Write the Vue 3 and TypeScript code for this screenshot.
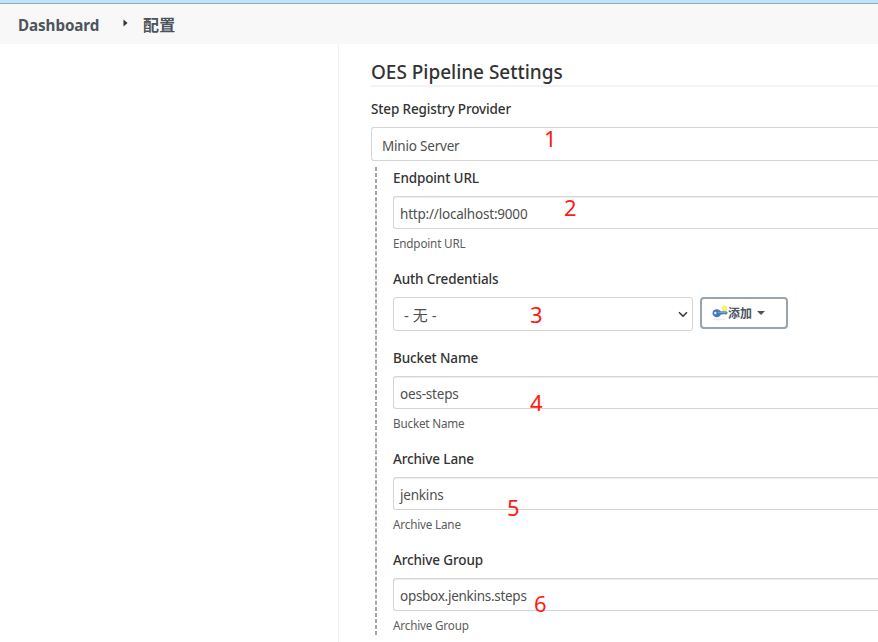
<script setup lang="ts">
interface Field {
  label: string
  value: string
  kind: 'text' | 'select'
  cls: string
  note: string
}

const fields: Field[] = [
  { label: 'Endpoint URL', value: 'http://localhost:9000', kind: 'text', cls: 'endpoint', note: '2' },
  { label: 'Auth Credentials', value: '- 无 -', kind: 'select', cls: 'auth', note: '3' },
  { label: 'Bucket Name', value: 'oes-steps', kind: 'text', cls: 'bucket', note: '4' },
  { label: 'Archive Lane', value: 'jenkins', kind: 'text', cls: 'lane', note: '5' },
  { label: 'Archive Group', value: 'opsbox.jenkins.steps', kind: 'text', cls: 'group', note: '6' },
]
</script>

<template>
  <div class="page">
    <header class="crumbs">
      <span class="crumb home">Dashboard</span>
      <svg class="sep" width="5" height="8" viewBox="0 0 5 8"><path d="M0.5 0.5 L4.5 4 L0.5 7.5 Z" fill="#333" /></svg>
      <span class="crumb current">配置</span>
    </header>
    <div class="body">
      <aside class="side"></aside>
      <main class="main">
        <h1 class="title"><span>OES Pipeline Settings</span></h1>
        <div class="label provider-label"><span>Step Registry Provider</span></div>
        <div class="box provider">
          <span>Minio Server</span>
          <b class="note n1">1</b>
        </div>
        <div class="nested">
          <svg class="dash" width="2" height="468"><line x1="1" y1="0" x2="1" y2="468" stroke="#a6a6a6" stroke-width="2" stroke-dasharray="4 2.026" /></svg>
          <div class="fields">
            <section v-for="f in fields" :key="f.label" class="field" :class="f.cls">
              <div class="label"><span>{{ f.label }}</span></div>
              <div class="row">
                <div class="box" :class="f.kind">
                  <span>{{ f.value }}</span>
                  <svg v-if="f.kind === 'select'" class="chev" width="10" height="7" viewBox="0 0 10 7"><path d="M1 1.2 L5 5.2 L9 1.2" fill="none" stroke="#333" stroke-width="1.5" /></svg>
                  <b class="note" :class="'n' + f.note">{{ f.note }}</b>
                </div>
                <button v-if="f.kind === 'select'" class="add" type="button">
                  <svg class="key" width="16" height="16" viewBox="0 0 16 16">
                    <ellipse cx="7" cy="14.4" rx="6" ry="0.8" fill="#ececec" />
                    <circle cx="12.5" cy="3.4" r="1.9" fill="#fffbc0" stroke="#f8ee45" stroke-width="1.5" />
                    <path d="M7 6.3 H14.4 L15.8 7.8 L14.6 9.6 H13 L12.2 9 L11.2 9.6 H7 Z" fill="#4c82c3" />
                    <ellipse cx="4.8" cy="8.2" rx="4.3" ry="4" fill="#4779b8" />
                    <circle cx="3.3" cy="8" r="1.2" fill="#e4edf7" />
                    <path d="M6 7.3 H14.4" stroke="#8bb3df" stroke-width="0.8" />
                  </svg>
                  <span>添加</span>
                  <svg class="caret" width="8" height="4" viewBox="0 0 8 4"><path d="M0 0 H8 L4 4 Z" fill="#4d545d" /></svg>
                </button>
              </div>
              <div v-if="f.kind === 'text'" class="help"><span>{{ f.label }}</span></div>
            </section>
          </div>
        </div>
      </main>
    </div>
  </div>
</template>

<style>
body {
  background: #fff;
  overflow: hidden;
}
</style>

<style scoped>
.page {
  width: 878px;
  height: 642px;
  overflow: hidden;
  display: flex;
  flex-direction: column;
  font-family: "Noto Sans", "Noto Sans CJK SC", sans-serif;
  color: #333;
}
.page * {
  box-sizing: border-box;
}
.page span {
  white-space: nowrap;
}
.crumbs {
  flex: none;
  height: 44px;
  background: #f8f8f8;
  border-top: 3px solid #bfe3f7;
  box-shadow: inset 0 1px #93a9bd;
  display: flex;
  align-items: center;
  padding: 1px 0 0 18px;
  font-size: 15.2px;
  letter-spacing: -0.08px;
  font-weight: 700;
  color: #4d545d;
}
.home {
  width: 105px;
  padding-top: 1px;
}
.sep {
  margin-top: -2px;
}
.current {
  margin-left: 15px;
  font-size: 16px;
  letter-spacing: 0.2px;
}
.body {
  flex: 1;
  display: flex;
  min-height: 0;
}
.side {
  width: 339px;
  flex: none;
  border-right: 1px solid #f2f2f2;
}
.main {
  flex: 1;
  min-width: 0;
  padding-left: 32px;
}
.title {
  margin: 0;
  height: 43px;
  padding-top: 15px;
  line-height: 27px;
  font-size: 19px;
  letter-spacing: -0.03px;
  font-weight: 550;
  border-bottom: 2px solid #f3f3f3;
}
.label {
  font-size: 13.5px;
  letter-spacing: -0.13px;
  line-height: 20px;
  font-weight: 550;
}
.provider-label {
  padding-top: 12px;
  height: 40px;
}
.box {
  position: relative;
  height: 34px;
  flex: 1;
  border: 1px solid #d5d5d5;
  border-right: 0;
  border-radius: 3px 0 0 3px;
  display: flex;
  align-items: center;
  font-size: 13.5px;
  letter-spacing: -0.2px;
  color: #4f4f4f;
}
.box.provider {
  padding: 3px 0 0 10px;
}
.box.text {
  height: 33px;
  padding: 3px 0 0 6px;
  box-shadow: inset 0 1px 1px #eee;
}
.group .box {
  letter-spacing: -0.28px;
}
.box.select {
  flex: none;
  width: 300px;
  border-right: 1px solid #d5d5d5;
  border-radius: 3px;
  padding: 0 4px 0 10px;
  justify-content: space-between;
}
.box.select span {
  font-size: 15px;
  letter-spacing: 0;
}
.nested {
  display: flex;
  padding: 6px 0 0 4px;
}
.dash {
  flex: none;
}
.fields {
  flex: 1;
  padding-left: 16px;
}
.field {
  height: 101px;
}
.field.auth {
  height: 79px;
}
.field .label {
  padding-top: 1px;
  height: 29px;
}
.row {
  display: flex;
}
.help {
  padding-top: 5px;
  font-size: 11.7px;
  letter-spacing: -0.18px;
  line-height: 18px;
  color: #5c5c5c;
}
.add {
  width: 88px;
  height: 32px;
  margin: 0 0 0 7px;
  padding: 0 0 0 10px;
  display: flex;
  align-items: center;
  background: #fff;
  border: 2px solid #98a4ae;
  border-radius: 4px;
  font: 700 12px "Noto Sans CJK SC", sans-serif;
  color: #4d545d;
}
.add span {
  margin-top: -1px;
}
.caret {
  margin-left: 5px;
}
.note {
  position: absolute;
  font-weight: 400;
  font-size: 22px;
  line-height: 24px;
  letter-spacing: 0;
  color: #fe1c12;
}
.n1 { left: 172px; top: -2px; }
.n2 { left: 170px; top: -2px; }
.n3 { left: 136px; top: 4px; }
.n4 { left: 136px; top: 13px; }
.n5 { left: 113px; top: 17px; }
.n6 { left: 140px; top: 12px; }
</style>
